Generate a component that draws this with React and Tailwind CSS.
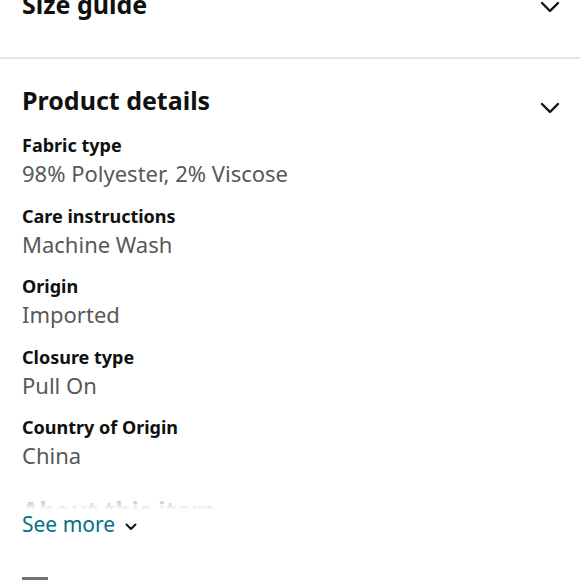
import React from 'react';

const details = [
  { label: 'Fabric type', value: '98% Polyester, 2% Viscose' },
  { label: 'Care instructions', value: 'Machine Wash' },
  { label: 'Origin', value: 'Imported' },
  { label: 'Closure type', value: 'Pull On' },
  { label: 'Country of Origin', value: 'China' },
];

const Chevron = ({ className = '' }) => (
  <svg width="20" height="12" viewBox="0 0 20 12" className={className} fill="none">
    <polyline points="2,2 10,10 18,2" stroke="#0f1111" strokeWidth="2.4" strokeLinecap="round" strokeLinejoin="round" />
  </svg>
);

const App = () => {
  return (
    <div
      className="w-[580px] h-[580px] overflow-hidden bg-white"
      style={{ fontFamily: '"Noto Sans", "Open Sans", sans-serif' }}
    >
      {/* Size guide (scrolled partly off top) */}
      <div className="flex items-start justify-between pl-[22px] pr-[20px] -mt-[12px]">
        <h2 className="text-[25px] leading-[32px] font-bold text-[#0f1111]">Size guide</h2>
        <Chevron className="mt-[13px]" />
      </div>

      <div className="mt-[37px] h-[2px] bg-[#e3e6e6]" />

      {/* Product details */}
      <div className="flex items-start justify-between pl-[22px] pr-[20px] mt-[25px]">
        <h2 className="text-[25px] leading-[32px] font-bold text-[#0f1111]">Product details</h2>
        <Chevron className="mt-[18px]" />
      </div>

      <div className="px-[22px] mt-[17px] flex flex-col gap-[16.5px]">
        {details.map((d) => (
          <div key={d.label} className="flex flex-col">
            <span className="text-[18px] leading-[24px] font-bold text-[#0f1111]">{d.label}</span>
            <span className="pt-[2px] text-[22px] leading-[28px] text-[#565959]">{d.value}</span>
          </div>
        ))}
      </div>

      {/* About this item, faded out */}
      <div className="relative px-[22px] mt-[25px] h-[16px] overflow-hidden">
        <h2 className="text-[25px] leading-[32px] font-bold text-[#565959]">About this item</h2>
        <div className="absolute inset-0 bg-gradient-to-b from-white/40 to-white" />
      </div>

      <button className="flex items-center gap-[10px] px-[22px]">
        <span className="text-[21px] leading-[28px] text-[#007185]">See more</span>
        <svg width="12" height="8" viewBox="0 0 12 8" fill="none" className="mt-[6px]">
          <polyline points="1.5,1.5 6,6 10.5,1.5" stroke="#0f1111" strokeWidth="2" strokeLinecap="round" strokeLinejoin="round" />
        </svg>
      </button>

      <div className="ml-[22px] mt-[39px] w-[26px] h-[6px] bg-[#6f7373]" />
    </div>
  );
};

export default App;
